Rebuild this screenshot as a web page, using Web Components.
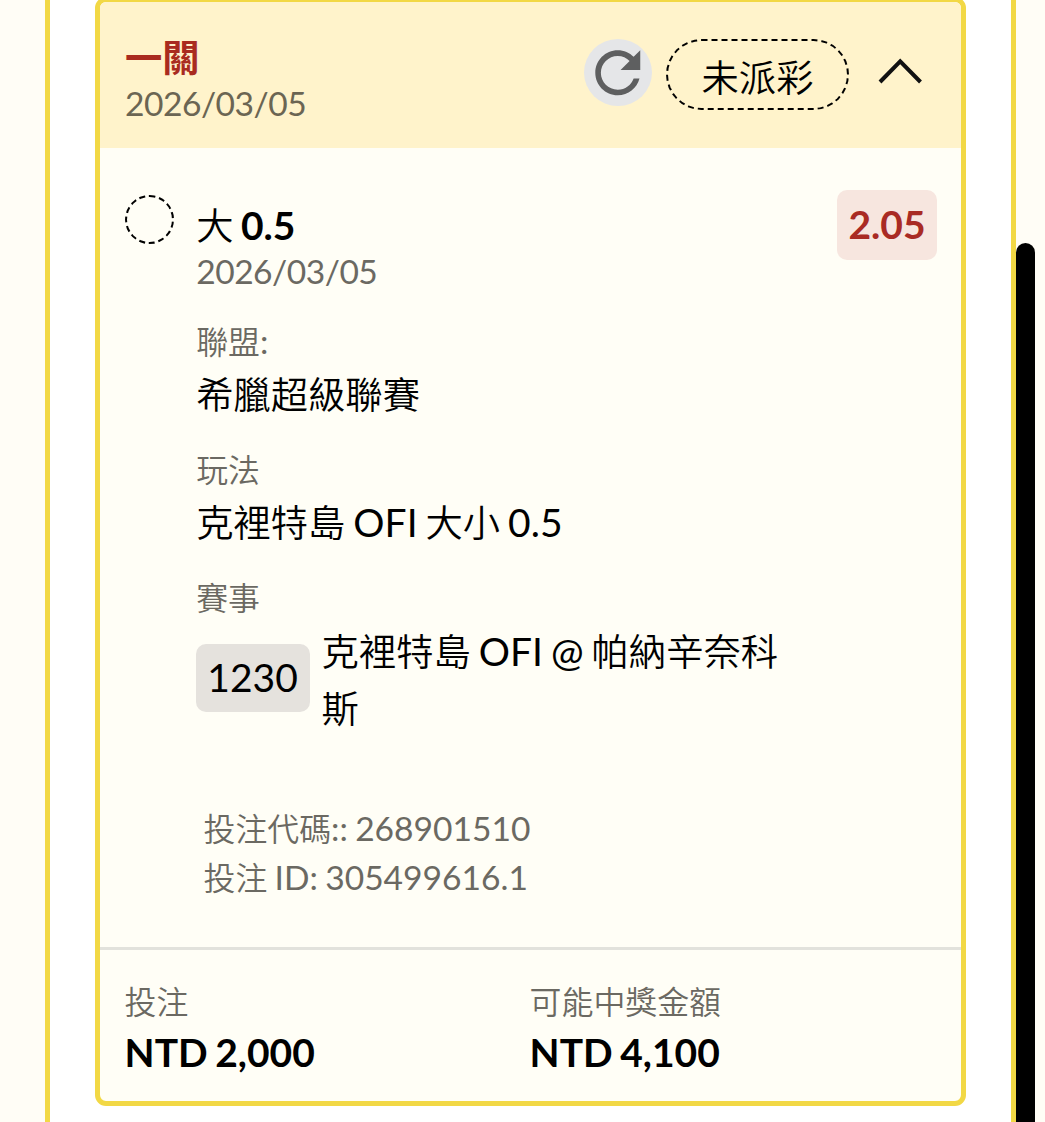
<!DOCTYPE html>
<html lang="zh-Hant">
<head>
<meta charset="utf-8">
<title>投注</title>
<style>
html,body{margin:0;height:1122px;overflow:hidden;background:#fffdf6}
</style>
</head>
<body>
<bet-page></bet-page>
<script>
const define = (name, html) => customElements.define(name, class extends HTMLElement {
  constructor() {
    super();
    this.attachShadow({ mode: 'open' }).innerHTML = html;
  }
});

/* Inline runs: latin and CJK text keep separate sizes on one baseline. */
define('latin-run', `<style>:host{font-family:Lato,sans-serif;line-height:0;font-size:var(--latin);letter-spacing:var(--latin-gap,0px);word-spacing:var(--space,-2px);white-space:pre}</style><slot></slot>`);
define('cjk-run', `<style>:host{font-family:"Noto Sans CJK TC",sans-serif;line-height:0;font-size:var(--cjk);font-weight:var(--cjk-weight,350)}</style><slot></slot>`);

define('label-line', `<style>
:host{display:block;font-family:Lato,"Noto Sans CJK TC",sans-serif;font-size:33px;line-height:var(--line,46px);height:var(--line,46px);white-space:nowrap;color:#6b6962;--latin:33.6px;--cjk:31.9px;--space:-1.3px}
</style><slot></slot>`);

define('value-line', `<style>
:host{display:block;font-family:Lato,"Noto Sans CJK TC",sans-serif;font-size:38px;line-height:var(--line,56px);color:#000;--latin:39px;--cjk:37.3px;--space:-2px}
</style><slot></slot>`);

define('refresh-button', `<style>
:host{display:block;width:68px;height:67px;border-radius:50%;background:#e5e6e8}
svg{display:block;width:67.5px;height:67.5px;margin-top:-.5px}
</style><svg viewBox="0 0 24 24"><path fill="#5e5f60" d="M17.65 6.35C16.2 4.9 14.21 4 12 4c-4.42 0-7.99 3.58-7.99 8s3.57 8 7.99 8c3.73 0 6.84-2.55 7.73-6h-2.08c-.82 2.33-3.04 4-5.65 4-3.31 0-6-2.69-6-6s2.69-6 6-6c1.66 0 3.14.69 4.22 1.78L13 11h7V4l-2.35 2.35z"/></svg>`);

define('status-pill', `<style>
:host{display:flex;box-sizing:border-box;width:183px;height:71px;justify-content:center;border:2px dashed #000;border-radius:36px;padding-top:8px}
</style><value-line><cjk-run><slot></slot></cjk-run></value-line>`);

define('chevron-up', `<style>:host{display:block;width:46px;height:30px}svg{display:block}</style>
<svg width="46" height="30" viewBox="0 0 46 30"><path d="M2 26 22.2 5.3 42.5 26" fill="none" stroke="#111" stroke-width="4"/></svg>`);

define('card-header', `<style>
:host{display:flex;box-sizing:border-box;height:146px;background:#fff3cb;padding:32.5px 37px 0 25px;justify-content:space-between;align-items:flex-start}
.title{--line:46px;--cjk-weight:700;color:#a92b1f;height:46px;margin:-1px 0 4.5px}
.date{--line:38px;--latin-gap:-.5px;color:#6b6553}
.actions{display:flex;align-items:flex-start;padding-top:4.5px}
status-pill{margin-left:14px}
chevron-up{margin:16.5px 0 0 29px}
</style>
<div><value-line class="title"><cjk-run>一關</cjk-run></value-line>
<label-line class="date"><latin-run>2026/03/05</latin-run></label-line></div>
<div class="actions"><refresh-button></refresh-button><status-pill>未派彩</status-pill><chevron-up></chevron-up></div>`);

define('odds-badge', `<style>
:host{display:flex;justify-content:center;box-sizing:border-box;width:100px;height:70px;border-radius:10px;background:#f7e6df;padding-top:5.5px}
value-line{color:#a92b24;font-weight:700}
</style><value-line><latin-run><slot></slot></latin-run></value-line>`);

define('match-code', `<style>
:host{display:flex;flex:none;justify-content:center;box-sizing:border-box;width:114px;height:68px;border-radius:10px;background:#e5e2dd;padding-top:5.5px}
</style><value-line><latin-run><slot></slot></latin-run></value-line>`);

define('detail-group', `<style>
:host{display:flex;flex-direction:column;gap:var(--group-gap,2.4px)}
</style><label-line><slot name="label"></slot></label-line><slot></slot>`);

define('bet-selection', `<style>
:host{display:flex;box-sizing:border-box;height:799px;padding:42px 24px 0 25px;align-items:flex-start}
.dot{flex:none;box-sizing:border-box;width:49px;height:49px;margin-top:5px;border:2px dashed #000;border-radius:50%}
.main{flex:1;display:flex;flex-direction:column;padding-top:7px;margin-left:22.2px}
.title{--line:56px;height:55px;font-weight:700}
.date{--line:38px;--latin-gap:-.5px}
.groups{display:flex;flex-direction:column;gap:24.1px;margin-top:27.5px}
.match{display:flex;align-items:flex-start;--line:56.8px}
match-code{--line:56px;margin:21px 12px 0 -.6px}
.ids{--line:49px;margin:67.5px 0 0 7.3px}
</style>
<span class="dot"></span>
<div class="main">
<value-line class="title"><cjk-run>大</cjk-run><latin-run> 0.5</latin-run></value-line>
<label-line class="date"><latin-run>2026/03/05</latin-run></label-line>
<div class="groups">
<detail-group><cjk-run slot="label">聯盟</cjk-run><latin-run slot="label">:</latin-run><value-line><cjk-run>希臘超級聯賽</cjk-run></value-line></detail-group>
<detail-group><cjk-run slot="label">玩法</cjk-run><value-line><cjk-run>克裡特島</cjk-run><latin-run> OFI </latin-run><cjk-run>大小</cjk-run><latin-run> 0.5</latin-run></value-line></detail-group>
<detail-group><cjk-run slot="label">賽事</cjk-run><div class="match"><match-code>1230</match-code><value-line><cjk-run>克裡特島</cjk-run><latin-run> OFI @ </latin-run><cjk-run>帕納辛奈科</cjk-run><br><cjk-run>斯</cjk-run></value-line></div></detail-group>
</div>
<div class="ids">
<label-line><cjk-run>投注代碼</cjk-run><latin-run>:: 268901510</latin-run></label-line>
<label-line><cjk-run>投注</cjk-run><latin-run> ID: 305499616.1</latin-run></label-line>
</div>
</div>
<odds-badge>2.05</odds-badge>`);

define('bet-totals', `<style>
:host{display:grid;grid-template-columns:405px 1fr;box-sizing:border-box;height:154px;border-top:3px solid #e2e2dc;padding:27.7px 25px 0 24.6px;--group-gap:.4px}
value-line{font-weight:700}
</style>
<detail-group><cjk-run slot="label">投注</cjk-run><value-line><latin-run>NTD 2,000</latin-run></value-line></detail-group>
<detail-group><cjk-run slot="label">可能中獎金額</cjk-run><value-line><latin-run>NTD 4,100</latin-run></value-line></detail-group>`);

define('bet-card', `<style>
:host{display:block;box-sizing:border-box;width:871px;height:1109px;margin-top:-3px;border:5px solid #f2d845;border-radius:11px;background:#fffef6;overflow:hidden}
</style><card-header></card-header><bet-selection></bet-selection><bet-totals></bet-totals>`);

define('bet-page', `<style>
:host{display:flex;height:1122px;width:1045px;overflow:hidden}
.panel{display:flex;box-sizing:border-box;width:971px;margin-left:45px;padding-left:45px;border:solid #f2d845;border-width:0 5px;background:#fff;align-items:flex-start}
.thumb{width:19px;margin-top:243px;height:900px;border-radius:10px;background:#000}
</style><div class="panel"><bet-card></bet-card></div><div class="thumb"></div>`);
</script>
</body>
</html>
